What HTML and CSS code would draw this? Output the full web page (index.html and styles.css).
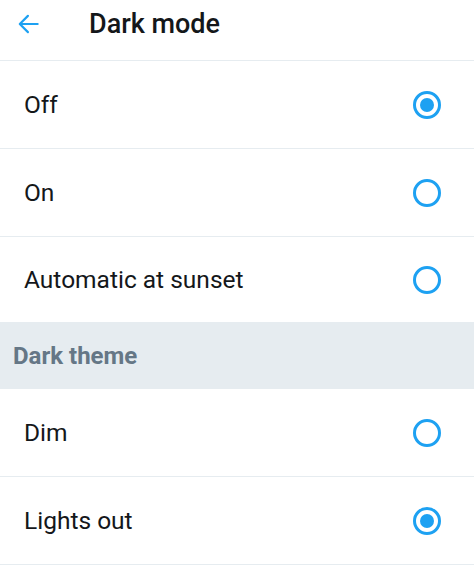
FILE: index.html
```html
<!DOCTYPE html>
<html>
<head>
<meta charset="utf-8">
<link rel="stylesheet" href="styles.css">
</head>
<body>
<div class="screen">
  <header class="topbar">
    <svg class="back" viewBox="0 0 24 24" width="24" height="24"><path d="M20 12H4.5M11 4.5L3.5 12l7.5 7.5" fill="none" stroke="#1da1f2" stroke-width="2" stroke-linecap="round" stroke-linejoin="round"/></svg>
    <h1 class="title">Dark mode</h1>
  </header>
  <div class="row"><span class="label">Off</span><span class="radio checked"></span></div>
  <div class="row"><span class="label">On</span><span class="radio"></span></div>
  <div class="row last"><span class="label">Automatic at sunset</span><span class="radio"></span></div>
  <div class="section">Dark theme</div>
  <div class="row"><span class="label">Dim</span><span class="radio"></span></div>
  <div class="row"><span class="label">Lights out</span><span class="radio checked"></span></div>
</div>
</body>
</html>
```

FILE: styles.css
```css
html, body {
  margin: 0;
  padding: 0;
  background: #ffffff;
}
body {
  font-family: Roboto, "Noto Sans", "Liberation Sans", sans-serif;
  color: #14171a;
}
.screen {
  width: 474px;
  display: flex;
  flex-direction: column;
}
.topbar {
  height: 60px;
  display: flex;
  align-items: center;
  border-bottom: 1px solid #e6ecf0;
  box-sizing: content-box;
}
.back {
  width: 26px;
  height: 26px;
  margin-left: 16px;
  margin-right: 47px;
  margin-top: -12px;
}
.title {
  margin: -12px 0 0 0;
  font-size: 27px;
  font-weight: 500;
  color: #14171a;
}
.row {
  height: 87px;
  display: flex;
  align-items: center;
  justify-content: space-between;
  padding: 0 33px 0 24px;
  border-bottom: 1px solid #e6ecf0;
}
.row.last {
  height: 85px;
  border-bottom: none;
}
.label {
  font-size: 24.5px;
  font-weight: 400;
}
.radio {
  width: 28px;
  height: 28px;
  box-sizing: border-box;
  border: 3px solid #1da1f2;
  border-radius: 50%;
  display: flex;
  align-items: center;
  justify-content: center;
}
.radio.checked::after {
  content: "";
  width: 14px;
  height: 14px;
  border-radius: 50%;
  background: #1da1f2;
}
.section {
  height: 67px;
  display: flex;
  align-items: center;
  padding-left: 13px;
  background: #e6ecf0;
  color: #657786;
  font-size: 24px;
  font-weight: 700;
}
```
